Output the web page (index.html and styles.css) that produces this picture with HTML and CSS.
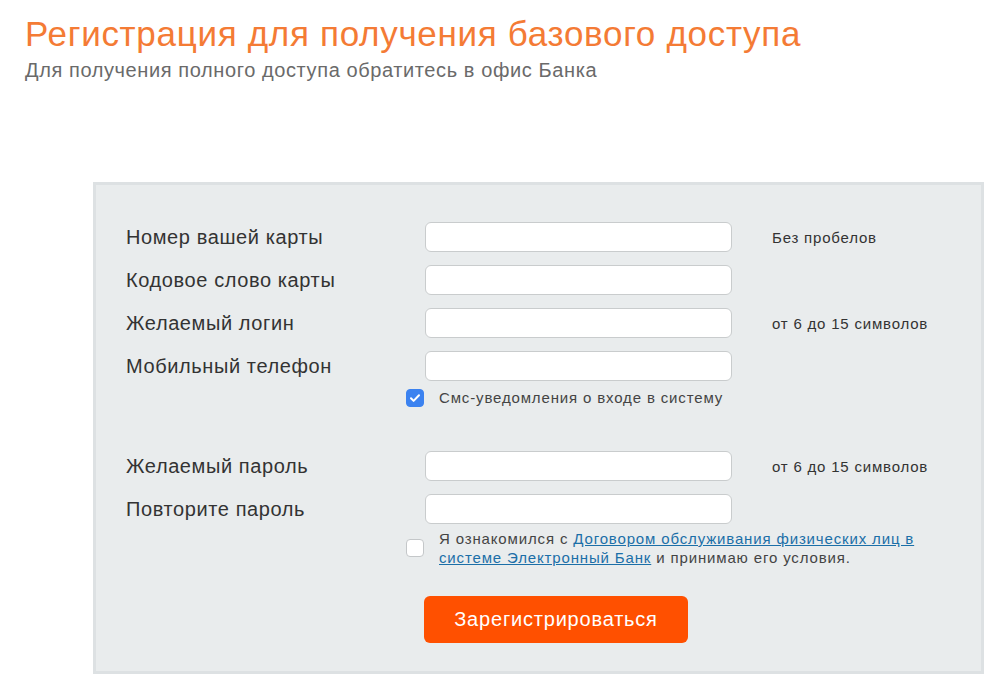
FILE: index.html
```html
<!DOCTYPE html>
<html lang="ru">
<head>
<meta charset="utf-8">
<title>Регистрация</title>
<link rel="stylesheet" href="styles.css">
</head>
<body>
<header class="head">
  <h1 class="title">Регистрация для получения базового доступа</h1>
  <p class="subtitle">Для получения полного доступа обратитесь в офис Банка</p>
</header>
<form class="panel">
  <div class="row">
    <label class="label">Номер вашей карты</label>
    <input class="field" type="text">
    <span class="hint">Без пробелов</span>
  </div>
  <div class="row">
    <label class="label">Кодовое слово карты</label>
    <input class="field" type="text">
    <span class="hint"></span>
  </div>
  <div class="row">
    <label class="label">Желаемый логин</label>
    <input class="field" type="text">
    <span class="hint">от 6 до 15 символов</span>
  </div>
  <div class="row">
    <label class="label">Мобильный телефон</label>
    <input class="field" type="text">
    <span class="hint"></span>
  </div>
  <div class="check-row sms">
    <span class="box checked"><svg viewBox="0 0 18 18" width="18" height="18"><path d="M5 9.3l2.6 2.6L13 6.2" fill="none" stroke="#fff" stroke-width="2" stroke-linecap="round" stroke-linejoin="round"/></svg></span>
    <span class="check-text">Смс-уведомления о входе в систему</span>
  </div>
  <div class="row pw">
    <label class="label">Желаемый пароль</label>
    <input class="field" type="password">
    <span class="hint">от 6 до 15 символов</span>
  </div>
  <div class="row">
    <label class="label">Повторите пароль</label>
    <input class="field" type="password">
    <span class="hint"></span>
  </div>
  <div class="check-row agree">
    <span class="box"></span>
    <span class="check-text">Я ознакомился с <a href="#" class="link">Договором обслуживания физических лиц в системе Электронный Банк</a> и принимаю его условия.</span>
  </div>
  <div class="actions">
    <button type="button" class="btn">Зарегистрироваться</button>
  </div>
</form>
</body>
</html>
```

FILE: styles.css
```css
html, body {
  margin: 0;
  padding: 0;
  background: #fff;
  font-family: "Liberation Sans", Arial, sans-serif;
  color: #333;
}
.head {
  padding: 14px 0 0 25px;
}
.title {
  margin: 0;
  font-weight: normal;
  font-size: 35px;
  line-height: 40px;
  color: #f47b35;
  letter-spacing: 0.7px;
}
.subtitle {
  margin: 4px 0 0 0;
  font-size: 20px;
  line-height: 24px;
  color: #6a6a6a;
  letter-spacing: 0.6px;
}
.panel {
  margin: 100px 0 0 93px;
  width: 891px;
  box-sizing: border-box;
  border: 3px solid #dde1e3;
  background: #e9eced;
  padding: 37px 0 28px 30px;
  height: 492px;
}
.row {
  display: flex;
  align-items: center;
  height: 30px;
  margin-bottom: 13px;
}
.label {
  width: 299px;
  font-size: 20px;
  letter-spacing: 0.6px;
  color: #333;
}
.field {
  width: 307px;
  height: 30px;
  box-sizing: border-box;
  border: 1px solid #c9cccd;
  border-radius: 6px;
  background: #fff;
  margin: 0;
  padding: 0 8px;
}
.hint {
  margin-left: 40px;
  font-size: 15px;
  letter-spacing: 0.8px;
  color: #333;
}
.check-row {
  display: flex;
  align-items: flex-start;
  padding-left: 280px;
  font-size: 15px;
  line-height: 19px;
  letter-spacing: 0.85px;
  color: #444;
}
.sms {
  margin-top: -6px;
  margin-bottom: 44px;
  align-items: center;
}
.box {
  width: 18px;
  height: 18px;
  box-sizing: border-box;
  border-radius: 4px;
  border: 1px solid #c4c7c9;
  background: #fff;
  flex: none;
  margin-right: 15px;
  display: flex;
}
.box.checked {
  background: #3b82f0;
  border-color: #3b82f0;
}
.box svg {
  margin: -1px;
}
.agree {
  margin-top: -8px;
  align-items: center;
}
.check-text {
  color: #444;
}
.agree .check-text {
  width: 486px;
}
.link {
  color: #1b6fa8;
  text-decoration: underline;
}
.actions {
  padding-left: 298px;
  margin-top: 29px;
}
.btn {
  width: 264px;
  height: 47px;
  border: 0;
  border-radius: 6px;
  background: #ff5000;
  color: #fff;
  font-family: "Liberation Sans", Arial, sans-serif;
  font-size: 20px;
  letter-spacing: 0.8px;
  cursor: pointer;
}
```
